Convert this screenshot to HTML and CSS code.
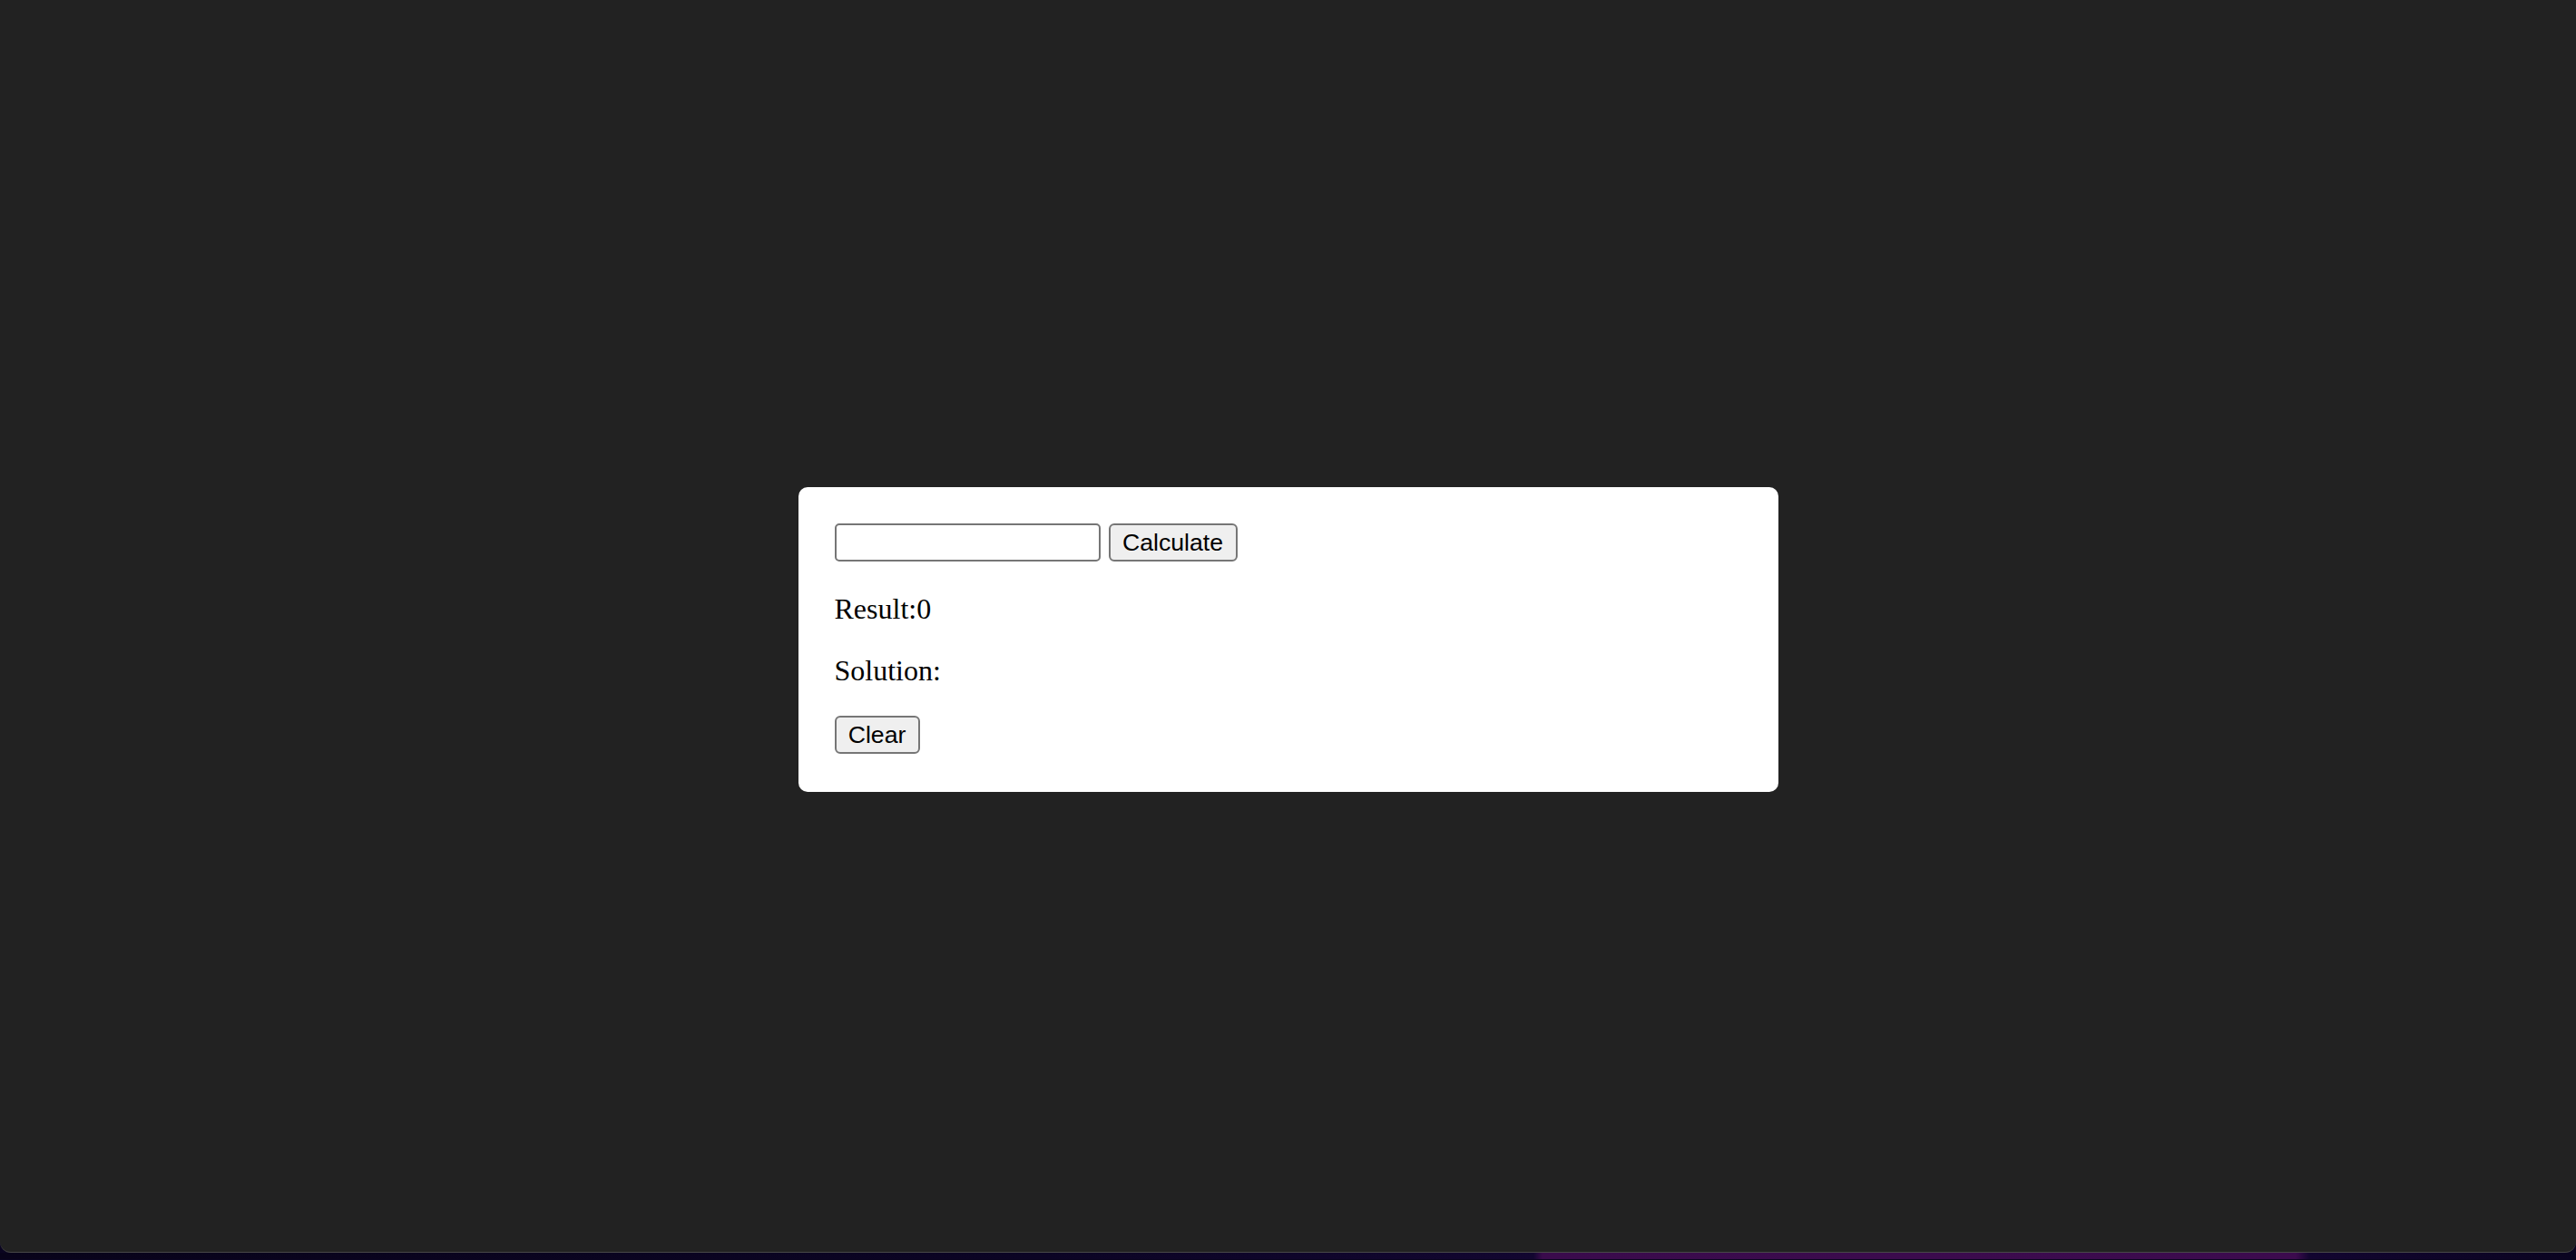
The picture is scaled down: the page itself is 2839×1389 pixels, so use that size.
FILE: index.html
```html
<!DOCTYPE html>
<html lang="en">
<head>
<meta charset="utf-8">
<title>Calculator</title>
<link rel="stylesheet" href="styles.css">
</head>
<body>
<div class="screen">
  <div class="card">
    <div class="row"><input class="field" type="text"> <button class="btn btn-calc">Calculate</button></div>
    <p class="line">Result:0</p>
    <p class="line">Solution:</p>
    <div class="row"><button class="btn btn-clear">Clear</button></div>
  </div>
</div>
<div class="desktop"></div>
</body>
</html>
```

FILE: styles.css
```css
html, body {
  margin: 0;
  padding: 0;
  background: #0a0420;
}

body {
  font-family: "Liberation Serif", "Times New Roman", serif;
  font-size: 32px;
  color: #000;
}

.screen {
  height: 1381px;
  box-sizing: border-box;
  padding-top: 29px;
  background: #222222;
  display: flex;
  align-items: center;
  justify-content: center;
  border-bottom: 1px solid #474747;
  border-radius: 0 0 12px 12px;
}

.card {
  width: 1000px;
  padding: 40px;
  background: #ffffff;
  border-radius: 10px;
}

.row {
  height: 44px;
  line-height: 44px;
  display: flex;
  align-items: flex-start;
}

.field {
  box-sizing: border-box;
  width: 293px;
  height: 42px;
  margin: 0 9px 0 0;
  padding: 2px 4px;
  border: 2px solid #767676;
  border-radius: 5px;
  background: #fff;
  font-family: "Liberation Sans", Arial, sans-serif;
  font-size: 26.67px;
}

.btn {
  box-sizing: border-box;
  height: 42px;
  margin: 0;
  padding: 0 12px;
  border: 2px solid #767676;
  border-radius: 6px;
  background: #efefef;
  color: #000;
  font-family: "Liberation Sans", Arial, sans-serif;
  font-size: 26.67px;
  line-height: 36px;
}

.btn-calc {
  width: 142px;
}

.btn-clear {
  width: 94px;
}

.line {
  margin: 32px 0;
  line-height: 36px;
}

.desktop {
  height: 7px;
  background: linear-gradient(90deg, #08031a 0px, #0b0424 1150px, #120630 1690px, #3a0b4c 1700px, #3c0b4e 2530px, #120530 2545px, #0a0420 2839px);
}
```
